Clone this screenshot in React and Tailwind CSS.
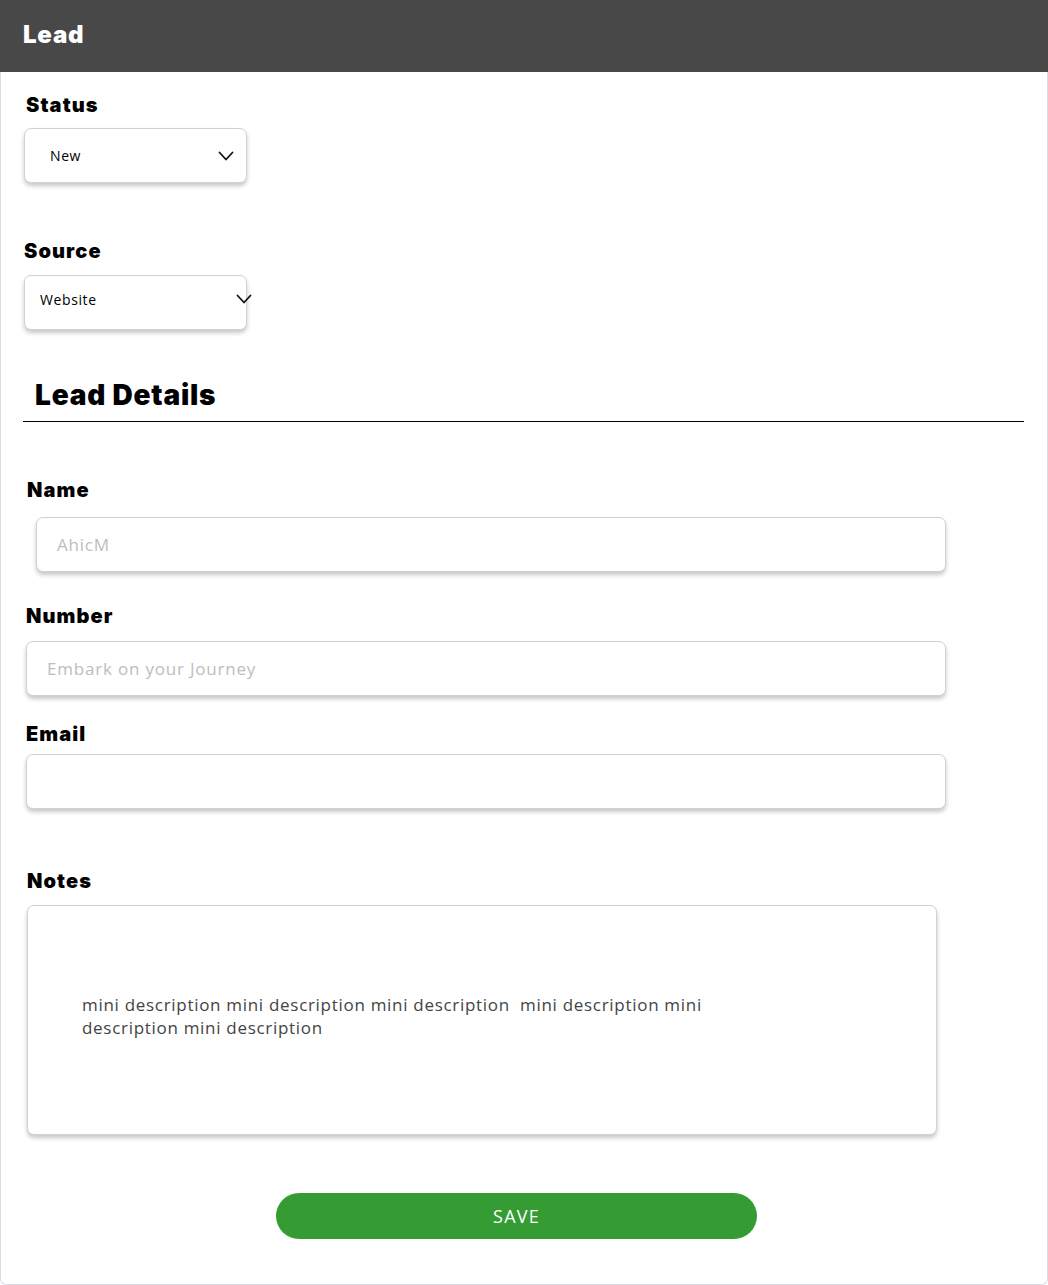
import React from "react";

const head = { fontFamily: "Inter, 'Liberation Sans', sans-serif" };
const body = { fontFamily: "'Open Sans', 'Liberation Sans', sans-serif" };

function Chevron({ className }) {
  return (
    <svg className={className} width="16" height="10" viewBox="0 0 16 10" fill="none">
      <path d="M1.5 1.5L8 8.5L14.5 1.5" stroke="#111" strokeWidth="1.8" strokeLinecap="round" strokeLinejoin="round" />
    </svg>
  );
}

function Label({ children, className = "" }) {
  return (
    <div style={head} className={`text-[20px] font-black text-black leading-none tracking-[1.1px] ${className}`}>
      {children}
    </div>
  );
}

const boxCls =
  "rounded-[7px] border border-[#d2d2d2] bg-white shadow-[0_3px_4px_rgba(0,0,0,0.22)]";

export default function App() {
  return (
    <div className="w-[1048px] h-[1285px] bg-white">
      <div className="h-[72px] bg-[#484848] flex items-center px-[23px] pb-[2px]">
        <span style={head} className="text-white text-[24px] font-black tracking-[0.8px]">Lead</span>
      </div>
      <div className="h-[1213px] border-x border-b border-[#dcdbe9] rounded-b-[6px] flex flex-col">
        <Label className="ml-[25px] mt-[23px]">Status</Label>
        <div className={`${boxCls} ml-[23px] mt-[13px] w-[223px] h-[55px] flex items-center justify-between pl-[25px] pr-[12px]`}>
          <span style={body} className="text-[14px] text-black tracking-[0.6px]">New</span>
          <Chevron />
        </div>
        <Label className="ml-[23px] mt-[58px]">Source</Label>
        <div className={`${boxCls} ml-[23px] mt-[14px] w-[223px] h-[55px] flex items-center pl-[15px] relative`}>
          <span style={body} className="text-[14px] text-black -mt-[6px] tracking-[0.6px]">Website</span>
          <Chevron className="absolute right-[-6px] top-[18px]" />
        </div>
        <div style={head} className="ml-[34px] mt-[51px] text-[28px] font-black text-black leading-none tracking-[0.8px]">
          Lead Details
        </div>
        <div className="ml-[22px] mt-[12px] w-[1001px] h-px bg-black" />
        <Label className="ml-[26px] mt-[58px]">Name</Label>
        <div className={`${boxCls} ml-[35px] mt-[17px] w-[910px] h-[55px] flex items-center pl-[20px]`}>
          <span style={body} className="text-[17px] text-[#bdbdbd] tracking-[0.8px]">AhicM</span>
        </div>
        <Label className="ml-[25px] mt-[34px]">Number</Label>
        <div className={`${boxCls} ml-[25px] mt-[15px] w-[920px] h-[55px] flex items-center pl-[20px]`}>
          <span style={body} className="text-[17px] text-[#bdbdbd] tracking-[0.8px]">Embark on your Journey</span>
        </div>
        <Label className="ml-[25px] mt-[28px]">Email</Label>
        <div className={`${boxCls} ml-[25px] mt-[10px] w-[920px] h-[55px]`} />
        <Label className="ml-[26px] mt-[62px]">Notes</Label>
        <div className={`${boxCls} ml-[26px] mt-[14px] w-[910px] h-[230px] pl-[54px] pt-[87px]`}>
          <p style={body} className="text-[17px] text-[#444] leading-[23px] w-[660px] tracking-[0.7px]">
            mini description mini description mini description&nbsp; mini description mini description mini description
          </p>
        </div>
        <button
          style={body}
          className="ml-[275px] mt-[58px] w-[481px] h-[46px] rounded-full bg-[#359c33] text-white text-[18px] font-medium tracking-[1.2px] flex items-center justify-center"
        >
          SAVE
        </button>
      </div>
    </div>
  );
}
